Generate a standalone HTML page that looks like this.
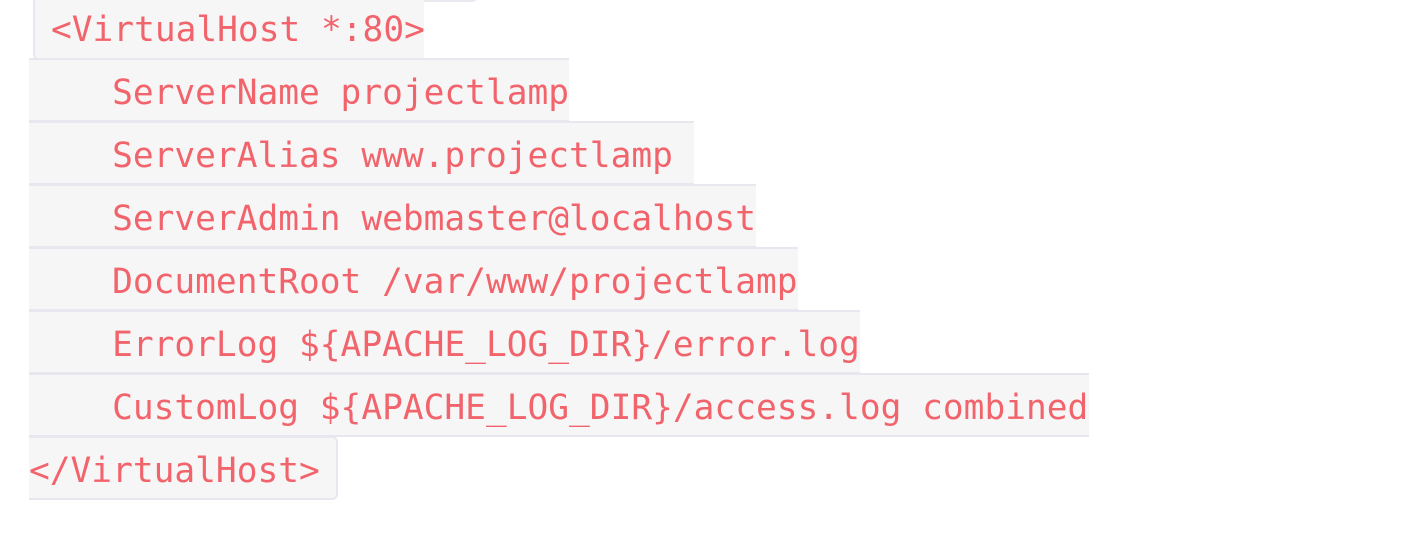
<!DOCTYPE html>
<html><head><style>
html,body{margin:0;padding:0;background:#fff;width:1428px;height:535px;overflow:hidden;position:relative}
.r{position:absolute;background:#f6f6f7;color:#f2646c;font-family:"DejaVu Sans Mono","Liberation Mono",monospace;font-size:34.5px;white-space:pre;box-sizing:border-box;border-top:2px solid #e7e8ef;border-bottom:2px solid #e7e8ef;height:64px;line-height:60px;padding-top:3px}
</style></head><body>
<div style="position:absolute;left:33px;top:-8px;width:448px;height:10px;border:2px solid #e9eaef;border-top:none;border-radius:0 0 10px 10px;box-sizing:border-box"></div>
<div class="r" style="left:33px;top:-6px;width:391px;height:66px;border-top:none;border-left:2px solid #e7e8ef;border-radius:0 0 0 6px;padding-left:16px;line-height:66px;padding-top:3px">&lt;VirtualHost *:80&gt;</div>
<div class="r" style="left:29px;top:58px;width:540px">    ServerName projectlamp</div>
<div class="r" style="left:29px;top:121px;width:665px">    ServerAlias www.projectlamp </div>
<div class="r" style="left:29px;top:184px;width:727px">    ServerAdmin webmaster@localhost</div>
<div class="r" style="left:29px;top:247px;width:769px">    DocumentRoot /var/www/projectlamp</div>
<div class="r" style="left:29px;top:310px;width:831px">    ErrorLog ${APACHE_LOG_DIR}/error.log</div>
<div class="r" style="left:29px;top:373px;width:1060px">    CustomLog ${APACHE_LOG_DIR}/access.log combined</div>
<div class="r" style="left:29px;top:436px;width:309px;border-right:2px solid #e7e8ef;border-radius:0 6px 6px 0">&lt;/VirtualHost&gt;</div>
</body></html>
